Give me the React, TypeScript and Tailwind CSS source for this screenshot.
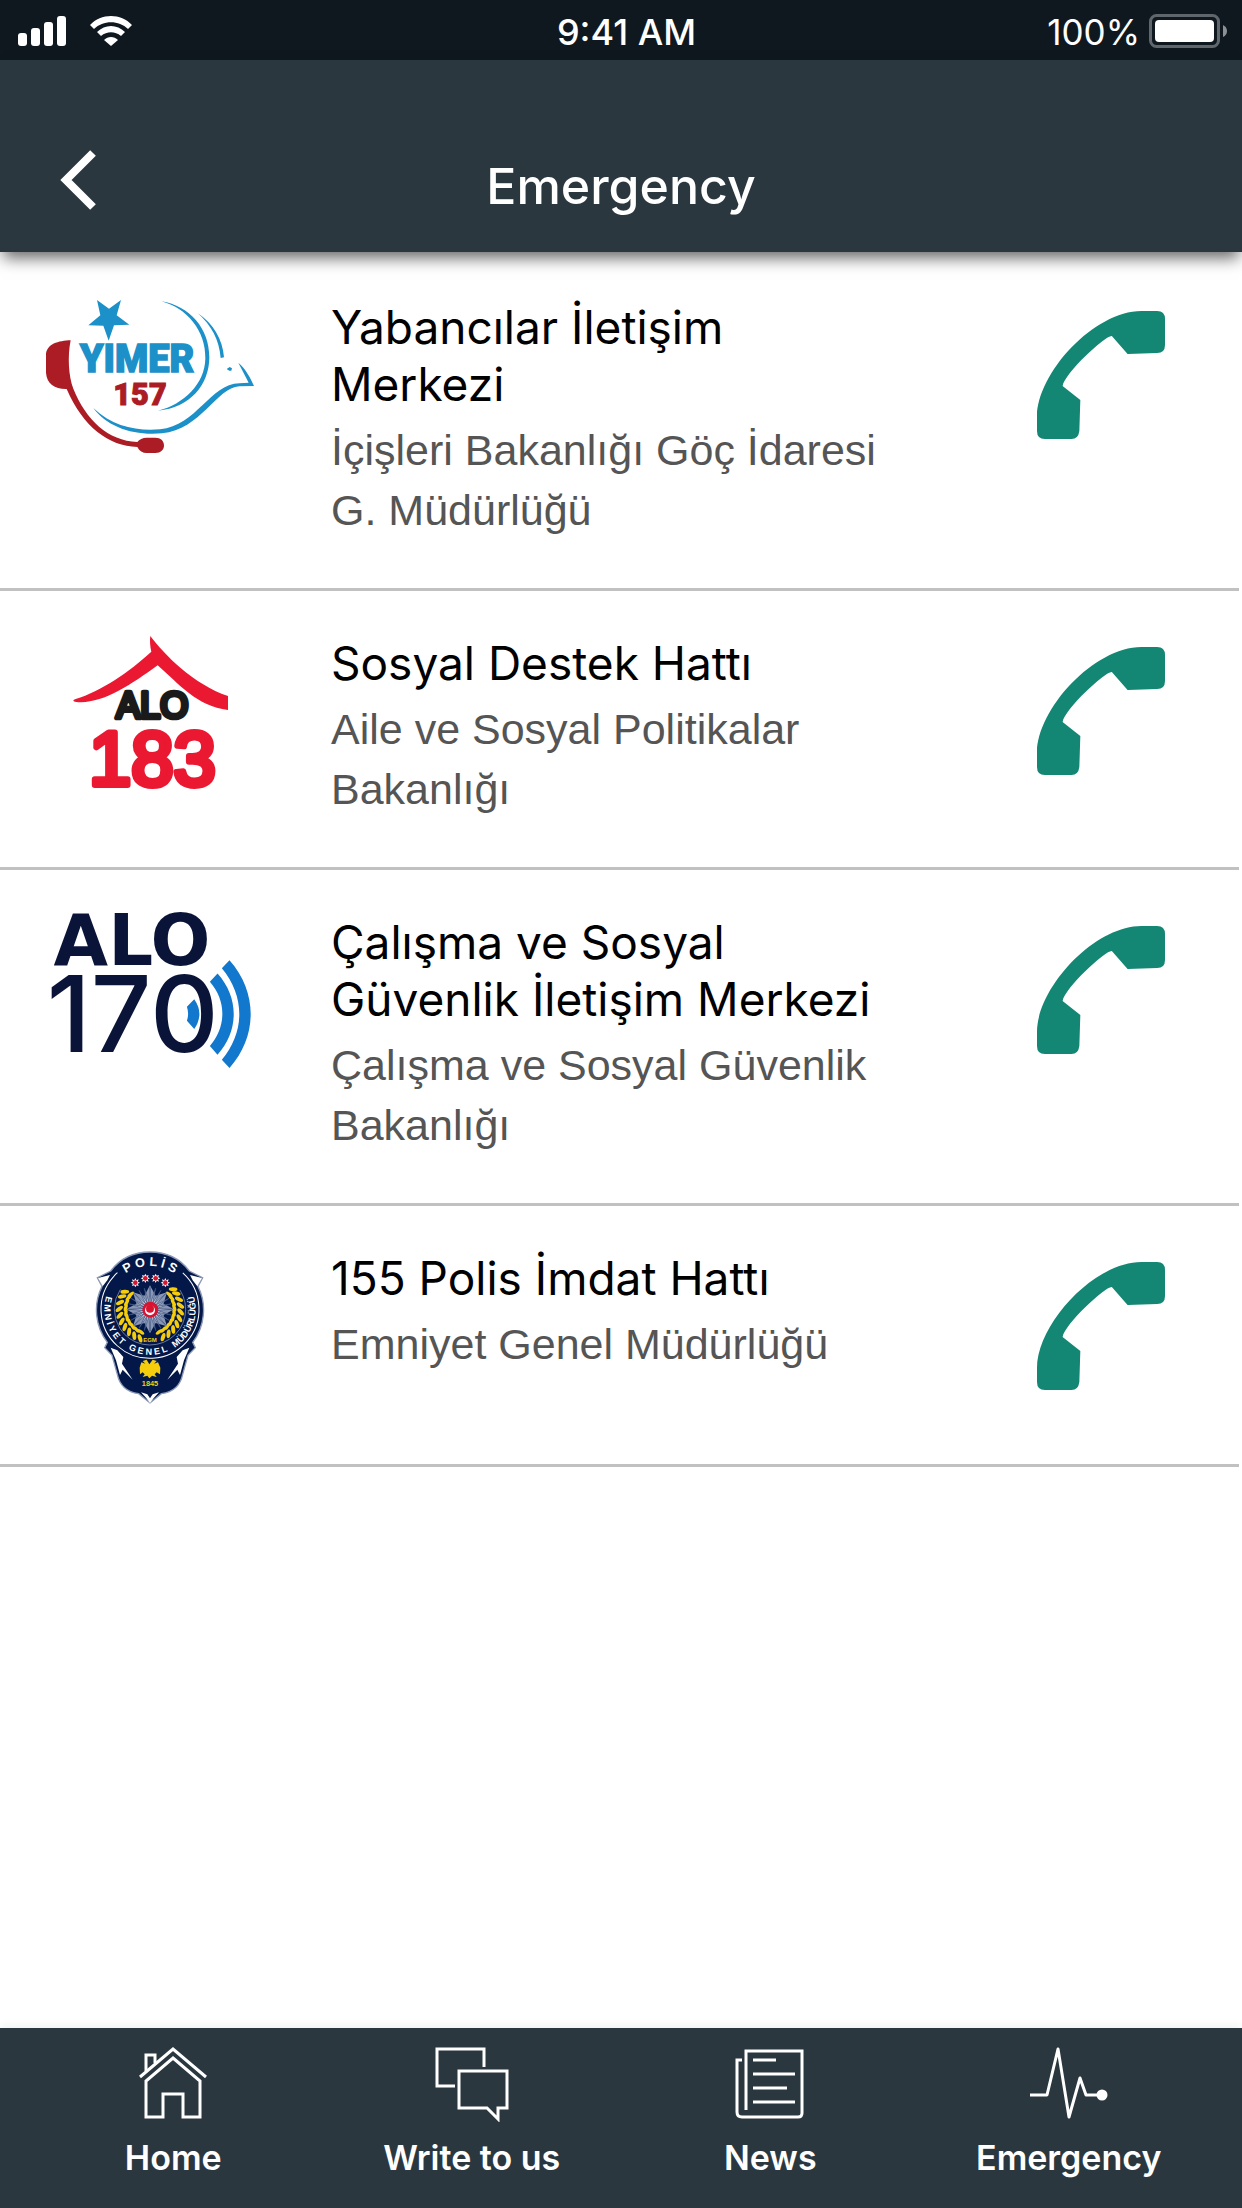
import type { ReactNode } from "react";

function YimerLogo() {
  return (
    <svg viewBox="48 60 624 459" className="h-[153px] w-[208px] overflow-visible" role="img" aria-label="Yimer 157">
      <g fill="#1c90c8">
        <path d="M201 60 L237 86 L273 60 L260 106 L298 134 L252 136 L236 182 L220 137 L175 136 L211 106 Z" />
        <path d="M394 64 C480 78 538 146 538 232 C538 314 480 384 384 392 C462 372 524 312 526 236 C528 152 470 84 394 64 Z" />
        <path d="M504 100 C550 132 578 178 582 232 L572 234 C568 180 544 136 504 100 Z" />
        <path d="M190 384 C248 440 322 454 390 448 C500 438 540 312 628 310 L656 308 L625 248 C645 264 662 294 672 318 L628 319 C560 322 512 450 396 460 C310 468 230 440 190 384 Z" />
        <path d="M590 267 L599 261 L606 265 L604 272 L598 272 Z" />
        <text x="321" y="275" textAnchor="middle" fontFamily="Roboto" fontWeight="900" fontSize="114" stroke="#1c90c8" strokeWidth="4">YIMER</text>
      </g>
      <g fill="#ab1c24">
        <path d="M122 181 C86 182 48 192 48 226 L48 278 C50 312 76 328 110 327 C160 442 236 498 322 501 C328 513 338 519 350 519 L376 519 C392 519 402 510 402 496 C402 482 392 473 376 473 L350 473 C338 473 328 478 322 486 C234 482 168 420 130 326 C116 290 112 230 122 181 Z" />
        <text x="330" y="374" textAnchor="middle" fontFamily="Roboto" fontWeight="900" fontSize="92" stroke="#ab1c24" strokeWidth="3">157</text>
      </g>
    </svg>
  );
}

function Alo183Logo() {
  return (
    <svg viewBox="68 48 465 459" className="h-[153px] w-[155px] overflow-visible" role="img" aria-label="Alo 183">
      <path
        d="M300 48 C340 102 430 194 533 228 L533 270 C440 260 384 190 322 136 C240 196 152 254 78 246 C68 245 66 240 76 237 C152 214 236 156 303 95 C299 78 298 60 300 48 Z"
        fill="#eb1832"
      />
      <text x="306" y="293" textAnchor="middle" fontFamily="Liberation Sans" fontSize="108" fill="#1a1a1a" stroke="#1a1a1a" strokeWidth="14" strokeLinejoin="round">ALO</text>
      <text x="306" y="496" textAnchor="middle" fontFamily="Liberation Sans" fontSize="228" fill="#eb1832" stroke="#eb1832" strokeWidth="18" strokeLinejoin="round">183</text>
    </svg>
  );
}

function Alo170Logo() {
  return (
    <svg viewBox="57 44 606 460" className="h-[153px] w-[202px] overflow-visible" role="img" aria-label="Alo 170">
      <g fill="#0a1439">
        <text x="306" y="194" textAnchor="middle" fontFamily="DejaVu Sans" fontWeight="700" fontSize="212">ALO</text>
        <text x="308" y="455" textAnchor="middle" fontFamily="Inter" fontWeight="500" fontSize="320">170</text>
      </g>
      <g fill="#1278cd">
        <path d="M599 180 C684 276 684 408 599 504 L576 479 C646 396 646 288 576 204 Z" />
        <path d="M563 220 C628 292 628 392 563 464 L540 438 C590 380 590 302 540 245 Z" />
        <path d="M493 297 Q524 341 493 387 L471 362 Q478 341 471 320 Z" />
      </g>
    </svg>
  );
}

const starPoints = (cx: number, cy: number, outer: number, inner: number, tips: number) =>
  Array.from({ length: tips * 2 }, (_, i) => {
    const r = i % 2 === 0 ? outer : inner;
    const a = (Math.PI * i) / tips - Math.PI / 2;
    return `${(cx + r * Math.cos(a)).toFixed(1)},${(cy + r * Math.sin(a)).toFixed(1)}`;
  }).join(" ");

const leafAngles = [112, 124, 136, 148, 160, 172, 184, 196, 208, 218];
const rosettes = [
  [166, 127],
  [196, 114],
  [227, 114],
  [256, 127],
];

function PolisLogo() {
  return (
    <svg viewBox="48 33 324 457" className="h-[153px] w-[108px] overflow-visible" role="img" aria-label="Polis">
      <path
        d="M210 35 C160 35 122 52 92 92 L52 112 L66 138 A160 160 0 0 0 82 306 L74 322 L96 345 L112 402 C120 440 146 456 176 460 L210 488 L244 460 C276 456 300 440 308 402 L324 345 L346 322 L338 306 A160 160 0 0 0 354 138 L368 112 L328 92 C298 52 260 35 210 35 Z"
        fill="#031849"
        stroke="#8d9ab8"
        strokeWidth="4"
      />
      <path d="M54 113 L90 104 L82 120 L68 138 Z M366 113 L330 104 L338 120 L352 138 Z" fill="#fff" />
      <circle cx="210" cy="207" r="147" fill="none" stroke="#fff" strokeWidth="3" strokeDasharray="708 216" transform="rotate(-48 210 207)" />
      <circle cx="210" cy="207" r="107" fill="none" stroke="#8d9ab8" strokeWidth="2" strokeDasharray="460 213" transform="rotate(-33 210 207)" />
      <defs>
        <path id="polis-top" d="M84 178 A129 129 0 0 1 336 178" />
        <path id="polis-ring" d="M99 126 A137 137 0 1 0 321 126" />
      </defs>
      <g fill="#fff" fontFamily="Liberation Sans" fontWeight="700">
        <text fontSize="38" textAnchor="middle">
          <textPath href="#polis-top" startOffset="50%">P O L İ S</textPath>
        </text>
        <text fontSize="27" textAnchor="middle">
          <textPath href="#polis-ring" startOffset="50%">{"E M N İ Y E T\u00a0\u00a0 G E N E L\u00a0\u00a0 MÜDÜRLÜĞÜ"}</textPath>
        </text>
      </g>
      <g fill="#f5cd0c">
        {leafAngles.map((a) =>
          [a, 180 - a].map((b, side) => (
            <g key={`${a}-${side}`} transform={`rotate(${b} 210 207)`}>
              <ellipse cx="302" cy="202" rx="13" ry="6" transform={side ? "rotate(40 302 202)" : "rotate(-40 302 202)"} />
              <ellipse cx="283" cy="207" rx="12" ry="5" transform={side ? "rotate(75 283 207)" : "rotate(-75 283 207)"} />
            </g>
          )),
        )}
      </g>
      <polygon points={starPoints(210, 207, 72, 44, 8)} fill="#8997b5" />
      <polygon points={starPoints(210, 207, 66, 20, 24)} fill="#dfe5ef" stroke="#344a78" strokeWidth="2" />
      <circle cx="211" cy="208" r="24" fill="#d91430" />
      <circle cx="210" cy="210" r="15" fill="#fff" />
      <circle cx="210" cy="205" r="12" fill="#d91430" />
      {rosettes.map(([x, y]) => (
        <g key={x}>
          <polygon points={starPoints(x, y, 14, 8, 8)} fill="#fff" />
          <circle cx={x} cy={y} r="7" fill="#d91430" />
        </g>
      ))}
      <path d="M92 322 L112 330 L130 350 L126 370 L158 418 L128 388 L120 404 L108 360 Z M328 322 L308 330 L290 350 L294 370 L262 418 L292 388 L300 404 L312 360 Z" fill="#fff" />
      <path d="M183 456 L202 462 L210 474 L218 462 L237 456 L222 472 L210 488 L198 472 Z" fill="#fff" />
      <g fill="#f5cd0c">
        <path d="M208 372 L200 358 L188 362 L196 370 L184 366 L179 382 L180 402 L188 396 L194 402 L188 410 L202 406 L208 414 L216 406 L230 410 L224 402 L230 396 L240 402 L241 382 L234 366 L222 370 L230 362 L218 358 Z" />
        <text x="210" y="305" textAnchor="middle" fontFamily="Liberation Sans" fontWeight="700" fontSize="18">EGM</text>
        <text x="210" y="438" textAnchor="middle" fontFamily="Liberation Sans" fontWeight="700" fontSize="22">1845</text>
      </g>
    </svg>
  );
}

function PhoneIcon() {
  return (
    <svg viewBox="0 0 130 128" preserveAspectRatio="none" className="h-[128px] w-[128px]" fill="#138674" aria-hidden="true">
      <path d="M106 0 H122 Q130 0 130 8 V34 Q130 42 122 42 L92 43 L76 25 C70 24 28 62 26 75 L44 89 L43 120 Q42 128 35 128 H8 Q0 128 0 120 V106 C0 62 58 0 106 0 Z" />
    </svg>
  );
}

type Contact = { title: string; office: string; phone: string; logo: ReactNode };

const contacts: Contact[] = [
  { title: "Yabancılar İletişim Merkezi", office: "İçişleri Bakanlığı Göç İdaresi G. Müdürlüğü", phone: "157", logo: <YimerLogo /> },
  { title: "Sosyal Destek Hattı", office: "Aile ve Sosyal Politikalar Bakanlığı", phone: "183", logo: <Alo183Logo /> },
  { title: "Çalışma ve Sosyal Güvenlik İletişim Merkezi", office: "Çalışma ve Sosyal Güvenlik Bakanlığı", phone: "170", logo: <Alo170Logo /> },
  { title: "155 Polis İmdat Hattı", office: "Emniyet Genel Müdürlüğü", phone: "155", logo: <PolisLogo /> },
];

const tabs: { label: string; icon: ReactNode }[] = [
  {
    label: "Home",
    icon: (
      <>
        <path d="M6 33 L39 5 L72 33" />
        <path d="M12 27 V11 H21 V19" />
        <path d="M39 14 L66 37 V73 H49 V50 H29 V73 H12 V37 Z" />
      </>
    ),
  },
  {
    label: "Write to us",
    icon: (
      <>
        <path d="M22 42 H4 V5 H51 V23" />
        <path d="M26 27 H74 V64 H65 V75 L54 64 H26 Z" />
      </>
    ),
  },
  {
    label: "News",
    icon: (
      <>
        <path d="M15 66 V7 H71 V69 Q71 73 67 73 H11 Q6 73 6 68 V16 H11" />
        <path d="M22 16 H45 M22 30 H64 M22 44 H56 M22 58 H64" />
      </>
    ),
  },
  {
    label: "Emergency",
    icon: (
      <>
        <path d="M0 51 H17 L28 5 L39 73 L50 34 L56 51 H70" strokeLinejoin="round" />
        <circle cx="72" cy="51" r="4" fill="#fff" />
      </>
    ),
  },
];

export default function App() {
  return (
    <div className="flex min-h-screen flex-col bg-white font-['Inter',sans-serif] text-black">
      <div className="grid h-[60px] grid-cols-3 items-center bg-[#10181f] pr-[15px] pl-[18px] text-[36px] leading-[60px] text-white">
        <div className="flex items-center gap-6">
          <svg viewBox="0 0 48 30" className="h-[30px] w-12" fill="#fff" aria-hidden="true">
            <rect x="0" y="17" width="9" height="13" rx="3" />
            <rect x="13" y="12" width="9" height="18" rx="3" />
            <rect x="26" y="6" width="9" height="24" rx="3" />
            <rect x="39" y="0" width="9" height="30" rx="3" />
          </svg>
          <svg viewBox="0 0 42 30" className="h-[30px] w-[42px]" fill="#fff" aria-hidden="true">
            <path d="M0 9 C11 -3 31 -3 42 9 L38 13 C29 4 13 4 4 13 Z" />
            <path d="M7 16 C15 8 27 8 35 16 L31 20 C25 15 17 15 11 20 Z" />
            <path d="M14 24 C18 20 24 20 28 24 L21 30 Z" />
          </svg>
        </div>
        <span className="pt-[2px] pl-2 text-center font-medium">9:41 AM</span>
        <div className="flex items-center justify-end gap-[9px]">
          <span className="pt-[2px] text-[35px]">100%</span>
          <svg viewBox="0 0 78 34" className="h-[34px] w-[78px]" aria-hidden="true">
            <rect x="1.5" y="1.5" width="68" height="31" rx="6" fill="none" stroke="#5f676d" strokeWidth="3" />
            <rect x="6" y="6" width="59" height="22" rx="4" fill="#fff" />
            <path d="M74 11 Q78 13 78 17 Q78 21 74 23 Z" fill="#8b9195" />
          </svg>
        </div>
      </div>

      <header className="relative z-10 grid h-48 grid-cols-[1fr_auto_1fr] bg-[#2b373f] px-[60px] pt-24 text-white shadow-[0_9px_15px_-3px_rgba(0,0,0,0.6)]">
        <button type="button" aria-label="Back" className="mt-[-6px] flex h-[60px] w-[60px] items-center">
          <svg viewBox="0 0 36 60" className="h-[60px] w-9" fill="none" stroke="#fff" strokeWidth="8" aria-hidden="true">
            <path d="M33 3 L6 30 L33 57" />
          </svg>
        </button>
        <h1 className="text-[50px] leading-[60px] font-medium">Emergency</h1>
      </header>

      <main className="grow pt-[3px]">
        <ul className="mr-[3px]">
          {contacts.map((c) => (
            <li key={c.phone} className="grid min-h-[261px] grid-cols-[331px_minmax(0,1fr)_355px] border-b-[3px] border-[#c1c1c1]">
              <div className="mr-[31px] flex justify-center pt-[45px]">{c.logo}</div>
              <div className="pt-11 pb-12">
                <h2 className="text-[46px] leading-[57px]">{c.title}</h2>
                <p className="mt-[7px] font-['Liberation_Sans',sans-serif] text-[43px] leading-[60px] text-[#555]">{c.office}</p>
              </div>
              <div className="pt-14 pl-[153px]">
                <a href={`tel:${c.phone}`} aria-label={`Call ${c.title}`} className="block w-fit">
                  <PhoneIcon />
                </a>
              </div>
            </li>
          ))}
        </ul>
      </main>

      <nav className="grid h-[180px] grid-cols-4 bg-[#2b373f] px-6 text-white shadow-[0_-3px_9px_rgba(0,0,0,0.06)]">
        {tabs.map((t) => (
          <a key={t.label} href="#" className="flex flex-col items-center gap-4 pt-4">
            <svg viewBox="0 0 78 78" className="h-[78px] w-[78px]" fill="none" stroke="#fff" strokeWidth="3" aria-hidden="true">
              {t.icon}
            </svg>
            <span className="text-[34px] leading-[40px] font-semibold">{t.label}</span>
          </a>
        ))}
      </nav>
    </div>
  );
}
